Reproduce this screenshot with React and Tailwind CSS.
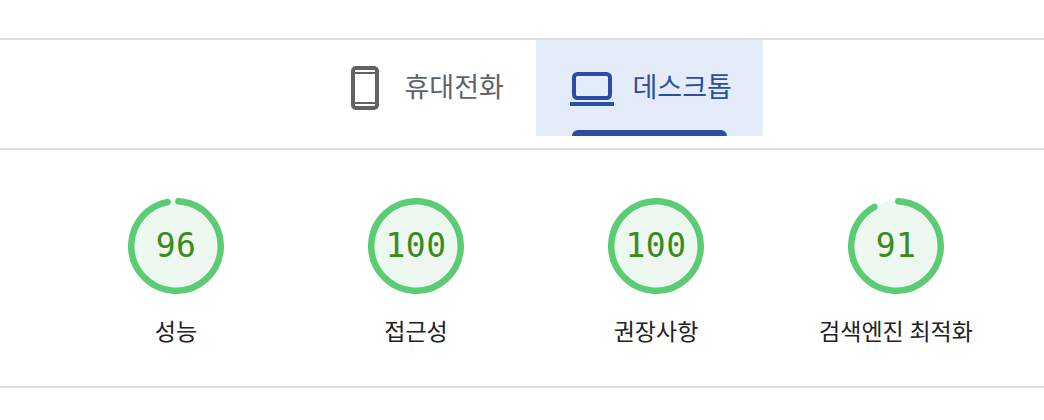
const scores = [
  { score: 96, label: '성능' },
  { score: 100, label: '접근성' },
  { score: 100, label: '권장사항' },
  { score: 91, label: '검색엔진 최적화' },
];

const PhoneIcon = () => (
  <svg width="28" height="44" viewBox="0 0 28 44" fill="none">
    <rect x="2" y="2" width="24" height="40" rx="3" stroke="#5f6368" strokeWidth="4" />
    <path d="M3 7h22M3 37h22" stroke="#5f6368" strokeWidth="2" />
  </svg>
);

const LaptopIcon = () => (
  <svg width="44" height="34" viewBox="0 0 44 34" fill="none" className="block">
    <rect x="4" y="2" width="36" height="24" rx="3.5" stroke="#2a4fa2" strokeWidth="4" />
    <path d="M0 32h44" stroke="#2a4fa2" strokeWidth="4" />
  </svg>
);

function Gauge({ score, label }) {
  const r = 44.75;
  const circumference = 2 * Math.PI * r;
  const dash = (score === 100 ? 1 : score / 100) * circumference;
  return (
    <div className="flex w-[240px] flex-col items-center">
      <div className="relative h-24 w-24">
        <svg width="96" height="96" viewBox="0 0 96 96" className="block">
          <circle cx="48" cy="48" r="45" fill="#edf8f0" />
          <circle
            cx="48"
            cy="48"
            r={r}
            fill="none"
            stroke="#5ccc74"
            strokeWidth="6.5"
            strokeLinecap="round"
            strokeDasharray={`${dash} ${circumference}`}
            transform="rotate(-87 48 48)"
          />
        </svg>
        <div className="absolute inset-0 flex items-center justify-center font-['DejaVu_Sans_Mono',monospace] text-[33px] tracking-[0.4px] text-[#3a8a1e]">
          {score}
        </div>
      </div>
      <div className="mt-[23px] h-[32px] text-[23px] leading-[32px] text-[#212124]">{label}</div>
    </div>
  );
}

export default function App() {
  return (
    <div className="h-[420px] w-[1044px] overflow-hidden bg-white font-['Roboto','Noto_Sans_CJK_KR',sans-serif]">
      <div className="mt-[38px] border-y-2 border-[#dcdde0]">
        <div className="flex h-[108px] justify-center pl-[38px]">
          <div className="flex h-[96px] w-[216px] items-center pl-[31px] text-[#5f6368]">
            <PhoneIcon />
            <span className="ml-[26px] text-[27px]">휴대전화</span>
          </div>
          <div className="relative flex h-[96px] w-[227px] items-center bg-[#e4ecfa] pl-[34px] text-[#2a4fa2]">
            <div className="mt-[2px]"><LaptopIcon /></div>
            <span className="ml-[19px] text-[27px]">데스크톱</span>
            <div className="absolute bottom-0 left-[36px] h-[6px] w-[155px] rounded-t-[6px] bg-[#2a4fa2]" />
          </div>
        </div>
      </div>
      <div className="flex h-[238px] justify-center border-b-2 border-[#dcdde0] pl-[28px] pt-[48px]">
        {scores.map((item) => (
          <Gauge key={item.label} score={item.score} label={item.label} />
        ))}
      </div>
    </div>
  );
}
